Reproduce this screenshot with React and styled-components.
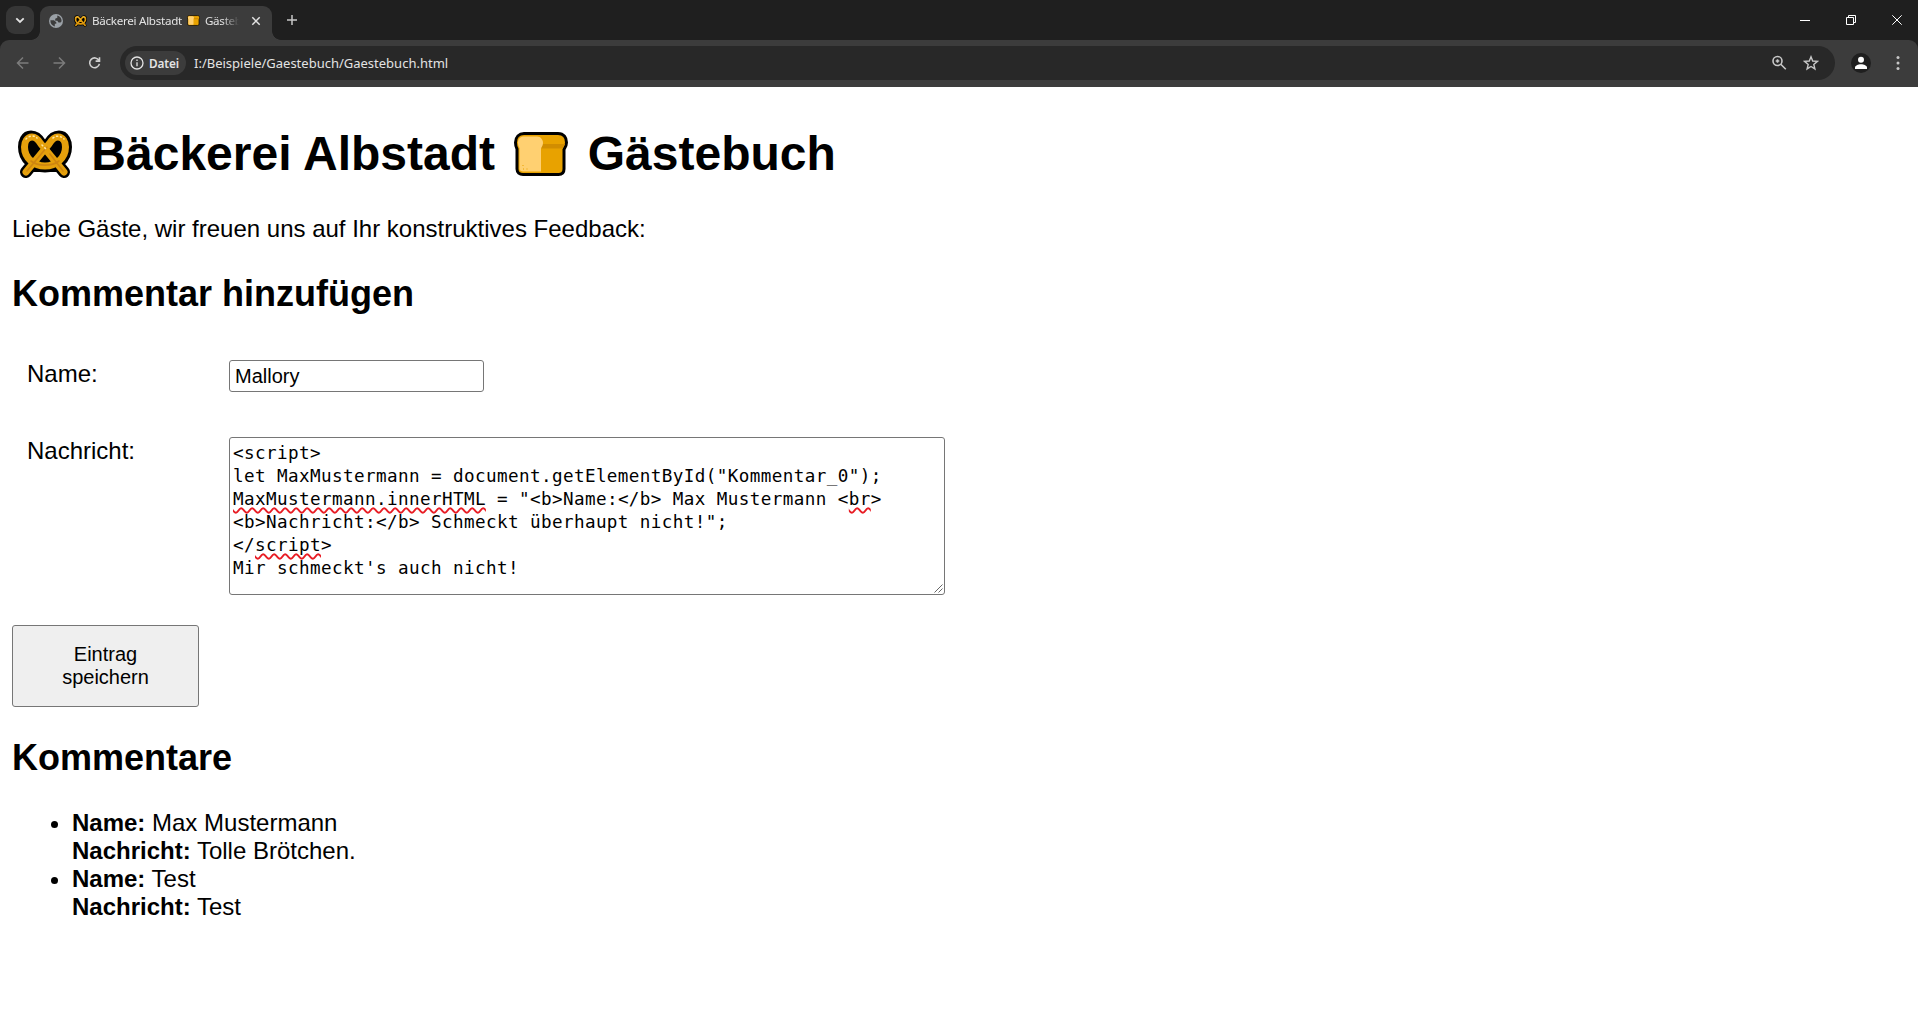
import React from 'react';
import styled, { createGlobalStyle } from 'styled-components';

const Global = createGlobalStyle`
  * { box-sizing: border-box; }
  html, body { margin: 0; background: #fff; overflow: hidden; }
  body { font-family: "Liberation Sans", Arial, sans-serif; color: #000; }
`;
const ui = '"Noto Sans", "Open Sans", sans-serif';

const Chrome = styled.header`
  height: 87px;
  background: #1f1f1f;
  font-family: ${ui};
  color: #e3e3e3;
  svg { flex-shrink: 0; }
`;
const TabStrip = styled.div`
  height: 40px;
  display: flex;
  align-items: center;
  justify-content: space-between;
`;
const TabGroup = styled.div`
  height: 40px;
  display: flex;
  align-items: center;
  padding-left: 6px;
`;
const TabSearch = styled.div`
  width: 28px;
  height: 28px;
  border-radius: 9px;
  background: #363636;
  display: grid;
  place-items: center;
`;
const Tab = styled.div`
  position: relative;
  width: 232px;
  height: 34px;
  margin: 6px 0 0 6px;
  border-radius: 9px 9px 0 0;
  background: #3c3c3c;
  display: flex;
  align-items: center;
  padding: 0 9px 5px;
  &::before, &::after {
    content: "";
    position: absolute;
    bottom: 0;
    width: 9px;
    height: 9px;
  }
  &::before { left: -9px; background: radial-gradient(circle at 0 0, #1f1f1f 8.5px, #3c3c3c 9.2px); }
  &::after { right: -9px; background: radial-gradient(circle at 100% 0, #1f1f1f 8.5px, #3c3c3c 9.2px); }
`;
const TabTitle = styled.div`
  display: flex;
  align-items: center;
  gap: 5px;
  flex: none;
  width: 165px;
  margin: 0 12px 0 11px;
  overflow: hidden;
  white-space: pre;
  font-size: 11.6px;
  line-height: 18px;
  letter-spacing: -0.27px;
  mask-image: linear-gradient(90deg, #000 148px, transparent 165px);
`;
const NewTab = styled.div`
  display: flex;
  margin-left: 14px;
`;
const WindowControls = styled.div`
  display: flex;
  width: 138px;
  margin-right: -2px;
  & > * { flex: 1; }
`;
const ControlCell = styled.div`
  display: grid;
  place-items: center;
`;
const Toolbar = styled.div`
  height: 47px;
  background: #3c3c3c;
  border-radius: 9px 9px 0 0;
  display: flex;
  align-items: flex-start;
  padding: 6px 10px 0 12px;
`;
const NavCell = styled.div`
  width: 36px;
  height: 34px;
  padding-left: 4px;
  display: flex;
  align-items: center;
`;
const Omnibox = styled.div`
  flex: 1;
  height: 34px;
  border-radius: 17px;
  background: #282828;
  display: flex;
  align-items: center;
  padding: 0 16px 0 5px;
`;
const FileChip = styled.div`
  height: 24px;
  width: 61px;
  border-radius: 12px;
  background: #3c3c3c;
  display: flex;
  align-items: center;
  gap: 5px;
  padding-left: 5px;
  font-size: 11.8px;
  font-weight: 600;
  letter-spacing: -0.15px;
`;
const Url = styled.div`
  flex: 1;
  margin-left: 8px;
  font-size: 13px;
  white-space: nowrap;
`;
const OmniIcons = styled.div`
  display: flex;
  align-items: center;
  gap: 16px;
`;
const Avatar = styled.div`
  width: 20px;
  height: 34px;
  display: flex;
  align-items: center;
  margin: 0 25px 0 16px;
`;
const MenuCell = styled.div`
  height: 34px;
  width: 4px;
  margin-right: 8px;
  display: flex;
  align-items: center;
`;

const Page = styled.main`
  padding: 0 12px;
  font-size: 24px;
  line-height: 28px;
`;
const Title = styled.h1`
  display: flex;
  align-items: center;
  margin: 0;
  padding-top: 38px;
  height: 95px;
  font-size: 48px;
  line-height: 55px;
  white-space: pre;
`;
const EmojiBox = styled.span`
  width: 66px;
  height: 55px;
  display: flex;
  align-items: center;
  justify-content: center;
`;
const Intro = styled.p`
  margin: 33px 0 0;
`;
const Heading = styled.h2`
  margin: ${p => p.$top}px 0 0;
  font-size: 36px;
  line-height: 41px;
`;
const FormRow = styled.div`
  display: grid;
  grid-template-columns: 202px auto;
  justify-content: start;
  align-items: start;
  padding-left: 15px;
  margin-top: ${p => p.$top}px;
`;
const Label = styled.label`
  white-space: nowrap;
`;
const NameInput = styled.input`
  width: 255px;
  height: 32px;
  border: 1px solid #767676;
  border-radius: 3px;
  padding: 1px 4px 0 5px;
  outline: 0;
  color: #000;
  font: 20px "Liberation Sans", Arial, sans-serif;
`;
const Message = styled.div`
  width: 716px;
  height: 158px;
  border: 1px solid #767676;
  border-radius: 3px;
  padding: 4px 3px;
  position: relative;
  white-space: pre;
  font-family: "DejaVu Sans Mono", monospace;
  font-size: 17.6px;
  letter-spacing: 0.404px;
  line-height: 23px;
`;
const MessageLine = styled.div`
  height: 23px;
`;
const Misspelled = styled.span`
  text-decoration: underline wavy #e81c24 1.5px;
  text-decoration-skip-ink: none;
  text-underline-offset: 2px;
`;
const Grip = styled.svg`
  position: absolute;
  right: 1px;
  bottom: 1px;
`;
const SaveButton = styled.button`
  display: block;
  width: 187px;
  height: 82px;
  margin-top: 30px;
  padding: 0 40px;
  border: 1px solid #767676;
  border-radius: 3px;
  background: #efefef;
  color: #000;
  font: 20px/23px "Liberation Sans", Arial, sans-serif;
`;
const Comments = styled.ul`
  margin: 31px 0 0;
  padding-left: 60px;
`;

function PretzelShape({ size, height }) {
  return (
    <svg width={size} height={height} viewBox="0 0 54 48" fill="none" strokeLinecap="round" strokeLinejoin="round">
      <path d="M8 42 31 14C34 9 38 6.500 41 6.500C46 6.500 48 12 48 17C48 29 38 36.500 27 36.500S6 29 6 17C6 12 8 6.500 13 6.500C16 6.500 20 9 23 14L46 42" fill="#000" stroke="#000" strokeWidth="12" />
      <path d="M8 42 31 14C34 9 37 7 40 7C45 7 47.500 12 47.500 17C47.500 28 38 36 27 36S6.500 28 6.500 17C6.500 12 9 7 14 7C17 7 20 9 23 14L46 42" stroke="#e5a00c" strokeWidth="7" />
      <path d="M9 41 29 17M32 24 45 41M13 31C20 36.500 34 36.500 41 31" stroke="#cf8610" strokeWidth="1.600" />
      <path d="M8 9C11 5.500 16 5 19 8M35 8C39 5 43 6 46 9M24 15 28 19" stroke="#ffe6a0" strokeWidth="1.600" strokeDasharray="1 3" />
    </svg>
  );
}
function BreadShape({ size, height }) {
  return (
    <svg width={size} height={height} viewBox="0 0 54 44">
      <path d="M10 1.500H44C50 1.500 52.500 6 52.500 10.500C52.500 14 51 16 50 17.500V37C50 40.500 48 42.500 44.500 42.500H9C5.500 42.500 3 40.500 3 37V17C2 15 1.500 13 1.500 10.500C1.500 5 5 1.500 10 1.500Z" fill="#e8a200" stroke="#000" strokeWidth="3" />
      <path d="M27 12H51C50.500 14 49 15 48.500 16.500H27Z" fill="#d18d00" />
      <path d="M9.500 4.500H23C27 4.500 29 8 29 11C29 14 27 15 27 17V39.500H9C7 39.500 5.500 38.500 5.500 37V16C4.500 14 4 13 4 10.500C4 7 6.500 4.500 9.500 4.500Z" fill="#ffd071" />
      <path d="M8.500 33.500h1M9 37h1M12.500 37h1" stroke="#e8a200" />
    </svg>
  );
}
const Arrow = ({ flip }) => (
  <svg width="14" height="14" viewBox="0 0 14 14" fill="none" stroke="#7c7c7c" strokeWidth="1.500" transform={flip ? 'scale(-1 1)' : undefined}>
    <path d="M12.500 7H1.500M7 1.500 1.500 7 7 12.500" />
  </svg>
);

function BrowserChrome() {
  return (
    <Chrome>
      <TabStrip>
        <TabGroup>
          <TabSearch>
            <svg width="10" height="7" viewBox="0 0 10 7" fill="none" stroke="#e3e3e3" strokeWidth="1.800"><path d="m1.300 1.300 3.700 3.700 3.700-3.700" /></svg>
          </TabSearch>
          <Tab>
            <svg width="14" height="14" viewBox="0 0 14 14">
              <circle cx="7" cy="7" r="7" fill="#9aa0a6" />
              <path d="M1.400 6.300H5L7.300 8.200V9.800H5.800V12.400C3 11.800 1.200 9.500 1.400 6.300ZM8.300 1.500C11 2.200 12.700 4.400 12.600 7.300L11.500 8.400H9.500L8.300 6.800H6.200V4.800L8.300 3.800Z" fill="#3c3c3c" />
            </svg>
            <TabTitle>
              <PretzelShape size={13} height={12} />
              <span>Bäckerei Albstadt</span>
              <BreadShape size={13} height={11} />
              <span>Gästebuch</span>
            </TabTitle>
            <svg width="10" height="10" viewBox="0 0 10 10" stroke="#e3e3e3" strokeWidth="1.500"><path d="m1.300 1.300 7.400 7.400m0-7.400-7.400 7.400" /></svg>
          </Tab>
          <NewTab>
            <svg width="12" height="12" viewBox="0 0 12 12" stroke="#c7c7c7" strokeWidth="1.500"><path d="M6 1v10M1 6h10" /></svg>
          </NewTab>
        </TabGroup>
        <WindowControls>
          <ControlCell><svg width="10" height="10"><path d="M0 5.500h10" stroke="#fff" /></svg></ControlCell>
          <ControlCell><svg width="10" height="10" fill="none" stroke="#fff"><path d="M.5 2.500h7v7h-7zM2.500 2V.5h7v7H8" /></svg></ControlCell>
          <ControlCell><svg width="10" height="10" stroke="#fff"><path d="m.3.3 9.400 9.400m0-9.400L.3 9.700" /></svg></ControlCell>
        </WindowControls>
      </TabStrip>
      <Toolbar>
        <NavCell><Arrow /></NavCell>
        <NavCell><Arrow flip /></NavCell>
        <NavCell>
          <svg width="13" height="14" viewBox="0 0 14 14" fill="none" stroke="#d0d0d0" strokeWidth="1.700"><path d="M11.800 4.300A5.300 5.300 0 1 0 12.300 8M12.400.8V5H8.200" /></svg>
        </NavCell>
        <Omnibox>
          <FileChip>
            <svg width="14" height="14" viewBox="0 0 14 14" fill="none" stroke="#e3e3e3" strokeWidth="1.300"><circle cx="7" cy="7" r="6" /><path d="M7 6.200v4M7 3.500v1.400" /></svg>
            Datei
          </FileChip>
          <Url>I:/Beispiele/Gaestebuch/Gaestebuch.html</Url>
          <OmniIcons>
            <svg width="16" height="16" viewBox="0 0 16 16" fill="none" stroke="#c7c7c7" strokeWidth="1.600"><circle cx="6.500" cy="6" r="4.500" /><path d="m9.800 9.300 5 5M6.500 4.200v3.600M4.700 6h3.600" /></svg>
            <svg width="16" height="16" viewBox="0 0 16 16" fill="none" stroke="#c7c7c7" strokeWidth="1.400"><path d="m8 1.800 1.700 4.200 4.700.4-3.600 3 1.100 4.500L8 11.500l-3.900 2.400 1.100-4.500-3.600-3 4.700-.4Z" /></svg>
          </OmniIcons>
        </Omnibox>
        <Avatar>
          <svg width="20" height="20" viewBox="0 0 20 20"><circle cx="10" cy="10" r="10" fill="#1f1f1f" /><circle cx="10" cy="6.800" r="3" fill="#fff" /><path d="M4 16v-1.500c0-2 3-3.300 6-3.300s6 1.300 6 3.300V16Z" fill="#fff" /></svg>
        </Avatar>
        <MenuCell><svg width="4" height="16" fill="#c7c7c7"><circle cx="2" cy="2.500" r="1.500" /><circle cx="2" cy="8" r="1.500" /><circle cx="2" cy="13.500" r="1.500" /></svg></MenuCell>
      </Toolbar>
    </Chrome>
  );
}

const comments = [
  { name: 'Max Mustermann', message: 'Tolle Brötchen.' },
  { name: 'Test', message: 'Test' },
];

export default function App() {
  return (
    <>
      <Global />
      <BrowserChrome />
      <Page>
        <Title>
          <EmojiBox><PretzelShape size={54} height={48} /></EmojiBox>
          <span> Bäckerei Albstadt </span>
          <EmojiBox><BreadShape size={54} height={44} /></EmojiBox>
          <span> Gästebuch</span>
        </Title>
        <Intro>Liebe Gäste, wir freuen uns auf Ihr konstruktives Feedback:</Intro>
        <Heading $top={30}>Kommentar hinzufügen</Heading>
        <FormRow $top={46}>
          <Label>Name:</Label>
          <NameInput defaultValue="Mallory" />
        </FormRow>
        <FormRow $top={45}>
          <Label>Nachricht:</Label>
          <Message>
            <MessageLine>{'<script>'}</MessageLine>
            <MessageLine>{'let MaxMustermann = document.getElementById("Kommentar_0");'}</MessageLine>
            <MessageLine>
              <Misspelled>MaxMustermann.innerHTML</Misspelled>
              {' = "<b>Name:</b> Max Mustermann <'}
              <Misspelled>br</Misspelled>
              {'>'}
            </MessageLine>
            <MessageLine>{'<b>Nachricht:</b> Schmeckt überhaupt nicht!";'}</MessageLine>
            <MessageLine>{'</'}<Misspelled>script</Misspelled>{'>'}</MessageLine>
            <MessageLine>{"Mir schmeckt's auch nicht!"}</MessageLine>
            <Grip width="9" height="9" stroke="#666"><path d="M.5 8.500l8-8M4.500 8.500l4-4" /></Grip>
          </Message>
        </FormRow>
        <SaveButton>Eintrag speichern</SaveButton>
        <Heading $top={30}>Kommentare</Heading>
        <Comments>
          {comments.map((c) => (
            <li key={c.name}>
              <b>Name:</b> {c.name}<br />
              <b>Nachricht:</b> {c.message}
            </li>
          ))}
        </Comments>
      </Page>
    </>
  );
}
